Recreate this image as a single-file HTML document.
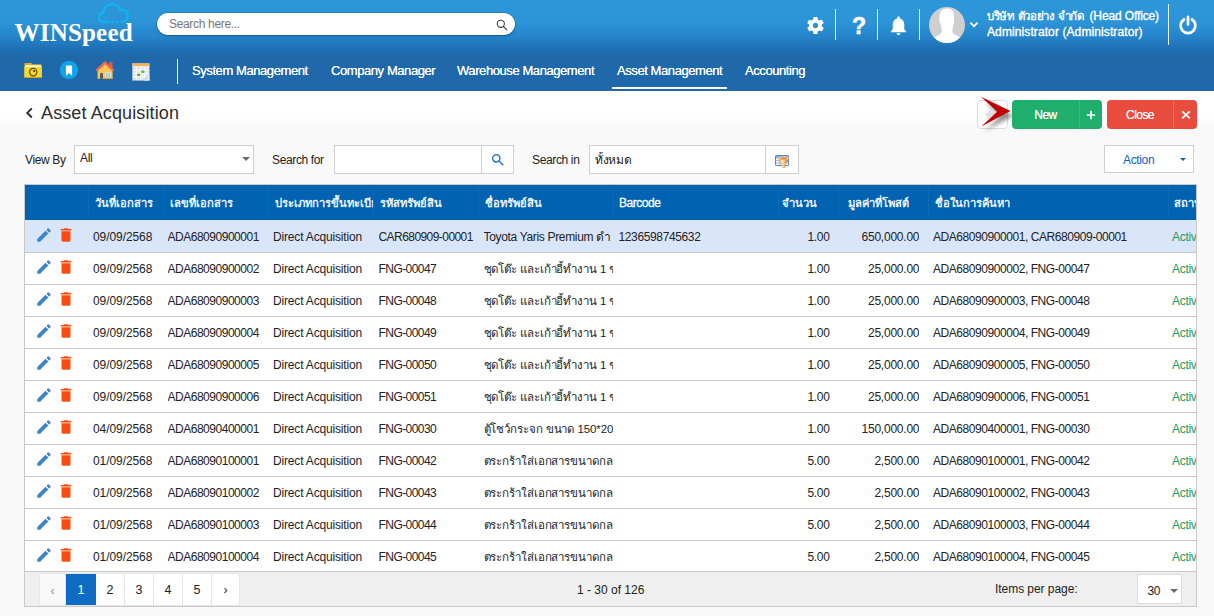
<!DOCTYPE html>
<html lang="th">
<head>
<meta charset="utf-8">
<title>Asset Acquisition</title>
<style>
*{box-sizing:border-box;margin:0;padding:0}
html,body{width:1214px;height:616px;overflow:hidden}
body{font-family:"Liberation Sans",sans-serif;font-size:12px;color:#222;background:#f9f9f9;position:relative}
.abs{position:absolute}
/* header */
#hdr{position:absolute;left:0;top:0;width:1214px;height:91px;background:linear-gradient(#2c96d8 0px,#2c95d7 21px,#2685cb 36px,#1f6eb3 50px,#1f69ab 55px,#1f69ab 91px)}
#logo{position:absolute;left:14.500px;top:18px;font-family:"Liberation Serif",serif;font-weight:bold;font-size:25px;line-height:30px;color:#fff;letter-spacing:.2px;white-space:nowrap}
#gsearch{position:absolute;left:157px;top:13px;width:358px;height:22px;border-radius:11px;background:#fff;box-shadow:0 0 0 1px rgba(0,0,0,.12),0 1px 2px rgba(0,0,0,.25)}
#gsearch span{position:absolute;left:12px;top:0;line-height:22px;font-size:12px;color:#777;letter-spacing:-.33px}
.vsep{position:absolute;width:1px;background:#fff;opacity:.9}
.nav{position:absolute;top:62px;line-height:18px;font-size:13px;letter-spacing:-.42px;color:#fff;white-space:nowrap;text-shadow:0 0 .6px #fff}
#usr{position:absolute;left:987px;top:8px;width:178px;height:32px;overflow:hidden;color:#fff;font-size:12px;line-height:16px;white-space:nowrap;-webkit-text-stroke:.35px #fff;letter-spacing:.1px}
/* title */
#tbar{position:absolute;left:0;top:91px;width:1214px;height:45px;background:linear-gradient(#fff 0,#fff 25px,#f9f9f9 38px)}
#title{position:absolute;left:41px;top:101px;font-size:18px;letter-spacing:.12px;line-height:24px;color:#2d2d2d;white-space:nowrap}
.btn{position:absolute;letter-spacing:-.55px;top:100px;height:29px;border-radius:4px;color:#fff;font-size:12px;line-height:29px;text-align:center;text-shadow:0 0 .5px #fff}
.lbl{position:absolute;letter-spacing:-.36px;font-size:12px;line-height:16px;color:#222;white-space:nowrap}
.box{position:absolute;top:145px;height:29px;background:#fff;border:1px solid #cfcfcf}
/* table */
#tbl{position:absolute;left:24px;top:184px;width:1173px;height:423px;border:1px solid #c9c9c9;background:#fff;overflow:hidden}
#th{position:absolute;left:25px;top:185px;width:1171px;height:35px;background:#0063b1;overflow:hidden}
.h{position:absolute;top:9px;line-height:18px;font-size:12px;-webkit-text-stroke:.3px #fff;color:#fff;white-space:nowrap;overflow:hidden}
.h.t{font-size:11.200px}
.hs{position:absolute;top:3px;width:1px;height:29px;background:rgba(255,255,255,.05)}
.row{position:absolute;left:25px;width:1171px;height:32px;background:#fff;overflow:hidden;box-shadow:inset 0 1px 0 #c8c8c8}
.row.sel{box-shadow:none}
.row.sel{background:#d9e6fa}
.ic{position:absolute;top:5.600px;width:18px;height:18px}
.ic.pen{left:10px}
.ic.tr{left:31.5px}
.c{position:absolute;top:8px;line-height:18px;font-size:12px;color:#222;white-space:nowrap;overflow:hidden;height:20px}
.c1{left:68px;width:70px;letter-spacing:-.08px}
.c2{left:142.500px;width:100px;letter-spacing:-.48px}
.c3{left:248px;width:100px;letter-spacing:-.17px}
.c4{left:353.500px;width:100px;letter-spacing:-.56px}
.c5{left:458.500px;width:129.500px;letter-spacing:-.33px}
.c5.t{font-size:11.500px;letter-spacing:-.1px}
.c6{left:593.500px;width:160px;letter-spacing:-.37px}
.c7{left:752px;width:52.500px;text-align:right;letter-spacing:-.33px}
.c8{left:813px;width:81.300px;text-align:right;letter-spacing:-.23px}
.c9{left:908px;width:232px;letter-spacing:-.44px}
.c10{left:1147px;width:24px;color:#259a5c;letter-spacing:-.3px}
#pager{position:absolute;left:25px;top:571px;width:1171px;height:35px;background:#efefef;border-top:1px solid #c8c8c8}
.pg{position:absolute;top:574px;height:31px;line-height:33px;overflow:hidden;text-align:center;font-size:12.500px;color:#222;background:#fff;border-right:1px solid #e3e3e3}
</style>
</head>
<body>
<div id="hdr">
  <svg class="abs" style="left:97px;top:2px" width="34" height="23" viewBox="0 0 34 23"><path d="M8.600 19.900 H6.800 A4.700 4.700 0 0 1 6.500 10.500 A8.700 8.700 0 0 1 23.300 7.700 A6.100 6.100 0 0 1 25.900 19.900 H24.400" fill="none" stroke="#10b4f2" stroke-width="2.300" stroke-linecap="round"/><path d="M10.600 19.900h2.500M14.700 19.900h2.500M18.800 19.900h2.500" stroke="#10b4f2" stroke-width="2.300" fill="none"/></svg>
  <div id="logo">WINSpeed</div>
  <div id="gsearch"><span>Search here...</span>
    <svg class="abs" style="left:339px;top:6px" width="12" height="12" viewBox="0 0 12 12"><circle cx="4.8" cy="4.8" r="3.6" fill="none" stroke="#444" stroke-width="1.1"/><path d="M7.5 7.5 L10.8 10.8" stroke="#444" stroke-width="1.2" stroke-linecap="round"/></svg>
  </div>
  <!-- right icons -->
  <svg class="abs" style="left:805.300px;top:14.600px" width="21" height="21" viewBox="0 0 24 24"><path fill="#fff" d="M19.14 12.94c.04-.3.06-.61.06-.94 0-.32-.02-.64-.07-.94l2.030-1.580a.49.49 0 0 0 .12-.61l-1.920-3.320a.488.488 0 0 0-.59-.22l-2.390.96c-.5-.38-1.030-.7-1.620-.94l-.36-2.540a.484.484 0 0 0-.48-.41h-3.840c-.24 0-.43.17-.47.41l-.36 2.540c-.59.24-1.130.57-1.620.94l-2.390-.96c-.22-.08-.47 0-.59.22L2.740 8.870c-.12.21-.08.47.12.61l2.030 1.580c-.05.3-.09.63-.09.94s.02.64.07.94l-2.030 1.580a.49.49 0 0 0-.12.610l1.920 3.320c.12.22.37.29.59.22l2.390-.96c.5.38 1.030.7 1.620.94l.36 2.540c.05.24.24.41.48.41h3.840c.24 0 .44-.17.470-.41l.36-2.540c.59-.24 1.130-.56 1.620-.94l2.390.96c.22.08.47 0 .59-.22l1.920-3.320c.12-.22.07-.47-.12-.61l-2.010-1.580zM12 15.100c-1.700 0-3.100-1.400-3.100-3.100s1.400-3.100 3.100-3.100 3.100 1.400 3.100 3.100-1.400 3.100-3.100 3.100z"/></svg>
  <div class="vsep" style="left:835px;top:9px;height:31px"></div>
  <div class="abs" style="left:852px;top:12.500px;width:14px;text-align:center;color:#fff;font-weight:bold;font-size:23px;line-height:26px;-webkit-text-stroke:.6px #fff">?</div>
  <div class="vsep" style="left:877px;top:9px;height:31px"></div>
  <svg class="abs" style="left:887.300px;top:13.700px" width="23" height="23" viewBox="0 0 24 24"><path fill="#fff" d="M12 22c1.100 0 2-.9 2-2h-4c0 1.100.89 2 2 2zm6-6v-5c0-3.070-1.640-5.640-4.500-6.320V4c0-.83-.67-1.500-1.500-1.500s-1.500.67-1.500 1.500v.68C7.630 5.360 6 7.920 6 11v5l-2 2v1h16v-1l-2-2z"/></svg>
  <div class="vsep" style="left:919px;top:9px;height:31px"></div>
  <svg class="abs" style="left:929px;top:7px" width="36" height="36" viewBox="0 0 36 36"><defs><clipPath id="av"><circle cx="18" cy="18" r="18"/></clipPath></defs><circle cx="18" cy="18" r="18" fill="#cfcfcf"/><g clip-path="url(#av)" fill="#fff"><path d="M18.200 1.400 C13.600 1.400 10.900 3.800 10.600 8.200 L10.400 13 C10.400 15.600 11.500 17 12 18.600 L12.800 23.800 C12.900 25.800 11.800 26.800 9.800 27.800 L3 31.600 V37 H33 V31.600 L26.400 27.800 C24.400 26.800 23.200 25.800 23.300 23.800 L24 18.600 C24.500 17 25.100 15.600 25.100 13 L24.900 8.200 C24.600 3.800 22.600 1.400 18.200 1.400 Z"/></g></svg>
  <svg class="abs" style="left:969px;top:21px" width="10" height="8" viewBox="0 0 10 8"><path d="M1.400 1.600 L5 5.200 L8.600 1.600" fill="none" stroke="#fff" stroke-width="1.700"/></svg>
  <div id="usr"><span style="display:inline-block;width:102.500px;height:16px;overflow:hidden;vertical-align:top;letter-spacing:-.3px;font-size:11.500px">บริษัท ตัวอย่าง จำกัด</span><span style="display:inline-block;vertical-align:top;letter-spacing:-.13px">(Head Office)</span><br>Administrator (Administrator)</div>
  <div class="vsep" style="left:1168px;top:4px;height:41px"></div>
  <svg class="abs" style="left:1178px;top:15px" width="20" height="20" viewBox="0 0 20 20"><path d="M6 4.500 A7.400 7.400 0 1 0 14 4.500" fill="none" stroke="#fff" stroke-width="2.700" stroke-linecap="round"/><path d="M10 1.900 V9.600" stroke="#fff" stroke-width="2.700" stroke-linecap="round"/></svg>

  <!-- toolbar icons -->
  <svg class="abs" style="left:24px;top:62px" width="18" height="17" viewBox="0 0 18 17"><path d="M.4 2.100 q0-1.200 1.200-1.200 h5.400 q.8 0 1 .8 l.2 .5 h8.400 q1.200 0 1.200 1.200 v11.300 q0 1.200-1.200 1.200 h-15 q-1.200 0-1.200-1.200z" fill="#d9b31c"/><rect x="1.300" y="3.300" width="15.600" height="2" fill="#fdfbe8"/><path d="M.4 5 h17.400 v9.700 q0 1.200-1.200 1.200 h-15 q-1.200 0-1.200-1.200z" fill="#f6d733"/><path d="M.4 14.300 v.4 q0 1.200 1.200 1.200 h15 q1.200 0 1.200-1.200 v-.4 q0 .7-1.200 .7 h-15 q-1.200 0-1.200-.7z" fill="#caa312"/><circle cx="9.200" cy="10.100" r="3.700" fill="none" stroke="#6a5200" stroke-width="1.200"/><path d="M9.200 10.100 V7.800 A2.300 2.300 0 0 1 11.500 10.100z" fill="#6a5200"/></svg>
  <svg class="abs" style="left:60px;top:61px" width="18" height="18" viewBox="0 0 18 18"><circle cx="9" cy="9" r="9.100" fill="#0fa4e8"/><path d="M5.900 4.600 h6.200 v10.300 l-3.100-2.900 l-3.100 2.900z" fill="#fff"/></svg>
  <svg class="abs" style="left:95px;top:60px" width="20" height="20" viewBox="0 0 20 20"><path d="M14.200 2.600 l1.700-1 l1.700 1 v4.400 h-3.400z" fill="#e5573f"/><path d="M2.600 9.500 L10 3.600 L17.600 9.500 V18.700 H2.600z" fill="#f7c85b"/><path d="M2.600 17.600 h15 v1.300 h-15z" fill="#e0a63a"/><path d="M10 .9 L19.400 9.700 L17.900 11.400 L10 4.600 L2.100 11.400 L.6 9.700z" fill="#f0684a"/><path d="M5 18.700 v-4.400 q0-1.500 1.500-1.500 q1.500 0 1.500 1.500 v4.400z" fill="#565a6c"/><rect x="10.200" y="12.700" width="5.600" height="4.600" fill="#fff"/><path d="M10.700 13.200h2v3.600h-2zM13.300 13.200h2v3.600h-2z" fill="#6fb7e9"/><path d="M10.200 15h5.600" stroke="#fff" stroke-width=".5"/></svg>
  <svg class="abs" style="left:132px;top:62.500px" width="18" height="18" viewBox="0 0 18 18"><rect x=".4" y=".4" width="17" height="17" fill="#dfe6f0"/><rect x=".4" y=".4" width="17" height="3" fill="#fab25a"/><rect x=".4" y="3.400" width="17" height=".7" fill="#f6f8fb"/><path d="M.4 7.200h17M.4 10.300h17M.4 13.400h17M4.500 4v13.400M8.700 4v13.400M12.900 4v13.400" stroke="#fbfcfe" stroke-width=".9"/><rect x="9.200" y="7.600" width="3.300" height="2.300" fill="#6bb42c"/><rect x="5" y="10.700" width="3.300" height="2.300" fill="#6bb42c"/><path d="M.4 .4v17h17" fill="none" stroke="#a9b6c8" stroke-width=".6"/><path d="M11.400 17.400 Q13.500 14.500 17.400 11.800 V17.400z" fill="#f4f5f8"/><path d="M11.400 17.400 Q13.500 14.500 17.400 11.800 Q15.800 15.500 14.800 16.300z" fill="#c5ccd8"/></svg>
  <div class="vsep" style="left:177px;top:59px;height:25px;opacity:1"></div>
  <div class="nav" style="left:192px">System Management</div>
  <div class="nav" style="left:331px">Company Manager</div>
  <div class="nav" style="left:457px">Warehouse Management</div>
  <div class="nav" style="left:617px">Asset Management</div>
  <div class="nav" style="left:745px">Accounting</div>
  <div class="abs" style="left:612px;top:87px;width:115px;height:2px;background:#fff"></div>
</div>

<div id="tbar"></div>
<svg class="abs" style="left:25px;top:107px" width="9" height="12" viewBox="0 0 9 12"><path d="M6.800 1.300 L2.300 5.900 L6.800 10.500" fill="none" stroke="#2d2d2d" stroke-width="1.900"/></svg>
<div id="title">Asset Acquisition</div>

<!-- star + arrow + buttons -->
<div class="abs" style="left:977px;top:100px;width:31px;height:29px;border:1px solid #dcdcdc;border-radius:4px;background:#fff"></div>
<svg class="abs" style="left:983px;top:108px" width="14" height="14" viewBox="0 0 24 24"><path fill="#dedede" d="M12 17.270 18.180 21l-1.640-7.030L22 9.240l-7.190-.610L12 2 9.190 8.630 2 9.240l5.460 4.730L5.820 21z"/></svg>
<svg class="abs" style="left:972px;top:92px;overflow:visible" width="50" height="46" viewBox="0 0 50 46"><defs><filter id="sh" x="-30%" y="-30%" width="180%" height="180%"><feGaussianBlur stdDeviation="2"/></filter></defs><path d="M12.500 9.500 L41.500 23.500 L12.500 39 L28 24.500z" fill="#000" opacity=".45" filter="url(#sh)"/><path d="M9 4.800 L38.400 19 L9.200 34.600 L25.300 19.800z" fill="#c00000"/></svg>
<div class="btn" style="left:1012px;width:90px;background:#1fae6b"></div>
<div class="abs" style="left:1079px;top:100px;width:1px;height:29px;background:#36be7e"></div>
<div class="btn" style="left:1012px;width:67px;top:101px">New</div>
<svg class="abs" style="left:1086px;top:110px" width="10" height="10" viewBox="0 0 10 10"><path d="M5 .8V9.200M.8 5H9.200" stroke="#fff" stroke-width="1.700"/></svg>
<div class="btn" style="left:1107px;width:90px;background:#e84c3d"></div>
<div class="abs" style="left:1173px;top:100px;width:1px;height:29px;background:#ef6b5e"></div>
<div class="btn" style="left:1107px;width:66px;top:101px">Close</div>
<svg class="abs" style="left:1180.500px;top:109.500px" width="10" height="10" viewBox="0 0 10 10"><path d="M1.200 1.400 L8.800 8.400 M8.800 1.400 L1.200 8.400" stroke="#fff" stroke-width="1.800"/></svg>

<!-- filter row -->
<div class="lbl" style="left:25px;top:152px">View By</div>
<div class="box" style="left:74px;width:180px"></div>
<div class="lbl" style="left:80px;top:149.500px">All</div>
<svg class="abs" style="left:242px;top:157px" width="8" height="4" viewBox="0 0 8 4"><path d="M0 0h8L4 4z" fill="#6b6b6b"/></svg>
<div class="lbl" style="left:272px;top:152px">Search for</div>
<div class="box" style="left:334px;width:180px"></div>
<div class="abs" style="left:481px;top:146px;width:1px;height:27px;background:#cfcfcf"></div>
<svg class="abs" style="left:489.500px;top:151.500px" width="16" height="16" viewBox="0 0 24 24"><path fill="#1b6fc2" d="M15.500 14h-.79l-.280-.270A6.471 6.471 0 0 0 16 9.500 6.500 6.500 0 1 0 9.500 16c1.610 0 3.090-.590 4.230-1.570l.270.280v.79l5 4.990L20.490 19l-4.990-5zm-6 0C7.010 14 5 11.990 5 9.500S7.010 5 9.500 5 14 7.010 14 9.500 11.990 14 9.500 14z"/></svg>
<div class="lbl" style="left:532px;top:152px">Search in</div>
<div class="box" style="left:589px;width:210px"></div>
<div class="abs" style="left:765px;top:146px;width:1px;height:27px;background:#cfcfcf"></div>
<div class="lbl" style="left:595px;top:152px;width:60px;overflow:hidden">ทั้งหมด</div>
<svg class="abs" style="left:775px;top:155px" width="15" height="13" viewBox="0 0 15 13"><defs><linearGradient id="fg" x1="0" x2="1"><stop offset="0" stop-color="#e9a544"/><stop offset=".35" stop-color="#fde9c4"/><stop offset=".7" stop-color="#e59a3a"/><stop offset="1" stop-color="#c87a22"/></linearGradient></defs><rect x=".5" y=".5" width="13" height="10" rx=".6" fill="#f4f7fd" stroke="#5d80cf" stroke-width="1"/><rect x="1" y="1" width="12" height="2.300" fill="#8fb0e6"/><path d="M1 5.600h12M1 8h12M4.800 3.300v7M9 3.300v7" stroke="#8fa8dc" stroke-width=".8"/><path d="M3.700 3.300 C3.700 6.300 6.200 7.300 7.200 8.800 V12 C7.200 12.900 10.300 12.900 10.300 12 V8.800 C11.300 7.300 13.900 6.300 13.900 3.300 Z" fill="url(#fg)" stroke="#cf8a35" stroke-width=".4"/><ellipse cx="8.800" cy="3.300" rx="5.100" ry="2" fill="#f3c58b"/><ellipse cx="8.800" cy="3.500" rx="3.400" ry="1.100" fill="#dd8a4c"/></svg>
<div class="abs" style="left:1104px;top:145px;width:90px;height:28px;background:#fff;border:1px solid #cfcfcf"></div>
<div class="lbl" style="left:1123px;top:152px;color:#0f62c0">Action</div>
<svg class="abs" style="left:1180px;top:158px" width="6" height="3" viewBox="0 0 6 3"><path d="M0 0h6L3 3z" fill="#0f62c0"/></svg>

<!-- table -->
<div id="tbl"></div>
<div id="th">
  <div class="hs" style="left:63px"></div><div class="hs" style="left:138px"></div><div class="hs" style="left:243px"></div><div class="hs" style="left:348px"></div><div class="hs" style="left:453px"></div><div class="hs" style="left:588px"></div><div class="hs" style="left:753px"></div><div class="hs" style="left:813px"></div><div class="hs" style="left:903px"></div><div class="hs" style="left:1143px"></div>
  <div class="h t" style="left:70px;width:66px">วันที่เอกสาร</div>
  <div class="h t" style="left:145px;width:96px">เลขที่เอกสาร</div>
  <div class="h t" style="left:250px;width:98px">ประเภทการขึ้นทะเบียน</div>
  <div class="h t" style="left:355px;width:96px">รหัสทรัพย์สิน</div>
  <div class="h t" style="left:460px;width:126px">ชื่อทรัพย์สิน</div>
  <div class="h" style="left:594px;width:150px;letter-spacing:-.47px">Barcode</div>
  <div class="h t" style="left:753px;width:39px;text-align:right">จำนวน</div>
  <div class="h t" style="left:813px;width:71px;text-align:right">มูลค่าที่โพสต์</div>
  <div class="h t" style="left:910px;width:200px">ชื่อในการค้นหา</div>
  <div class="h t" style="left:1149px;width:22px">สถานะ</div>
</div>
<div class="row sel" style="top:220px"><svg class="ic pen" viewBox="0 0 24 24"><path fill="#3a86cb" d="M3 17.25V21h3.75L17.81 9.94l-3.75-3.75L3 17.25zM20.71 7.04a1 1 0 0 0 0-1.41l-2.34-2.34a1 1 0 0 0-1.41 0l-1.83 1.83 3.75 3.75 1.83-1.83z"/></svg><svg class="ic tr" viewBox="0 0 24 24"><path fill="#fb4a12" d="M6 19c0 1.1.9 2 2 2h8c1.1 0 2-.9 2-2V7H6v12zM19 4h-3.500l-1-1h-5l-1 1H5v2h14V4z"/></svg>
<span class="c c1">09/09/2568</span><span class="c c2">ADA68090900001</span><span class="c c3">Direct Acquisition</span><span class="c c4">CAR680909-00001</span><span class="c c5">Toyota Yaris Premium ดำ</span><span class="c c6">1236598745632</span><span class="c c7">1.00</span><span class="c c8">650,000.00</span><span class="c c9">ADA68090900001, CAR680909-00001</span><span class="c c10">Active</span></div>
<div class="row" style="top:252px"><svg class="ic pen" viewBox="0 0 24 24"><path fill="#3a86cb" d="M3 17.25V21h3.75L17.81 9.94l-3.75-3.75L3 17.25zM20.71 7.04a1 1 0 0 0 0-1.41l-2.34-2.34a1 1 0 0 0-1.41 0l-1.83 1.83 3.75 3.75 1.83-1.83z"/></svg><svg class="ic tr" viewBox="0 0 24 24"><path fill="#fb4a12" d="M6 19c0 1.1.9 2 2 2h8c1.1 0 2-.9 2-2V7H6v12zM19 4h-3.500l-1-1h-5l-1 1H5v2h14V4z"/></svg>
<span class="c c1">09/09/2568</span><span class="c c2">ADA68090900002</span><span class="c c3">Direct Acquisition</span><span class="c c4">FNG-00047</span><span class="c c5 t">ชุดโต๊ะ และเก้าอี้ทำงาน 1 ชุด</span><span class="c c6"></span><span class="c c7">1.00</span><span class="c c8">25,000.00</span><span class="c c9">ADA68090900002, FNG-00047</span><span class="c c10">Active</span></div>
<div class="row" style="top:284px"><svg class="ic pen" viewBox="0 0 24 24"><path fill="#3a86cb" d="M3 17.25V21h3.75L17.81 9.94l-3.75-3.75L3 17.25zM20.71 7.04a1 1 0 0 0 0-1.41l-2.34-2.34a1 1 0 0 0-1.41 0l-1.83 1.83 3.75 3.75 1.83-1.83z"/></svg><svg class="ic tr" viewBox="0 0 24 24"><path fill="#fb4a12" d="M6 19c0 1.1.9 2 2 2h8c1.1 0 2-.9 2-2V7H6v12zM19 4h-3.500l-1-1h-5l-1 1H5v2h14V4z"/></svg>
<span class="c c1">09/09/2568</span><span class="c c2">ADA68090900003</span><span class="c c3">Direct Acquisition</span><span class="c c4">FNG-00048</span><span class="c c5 t">ชุดโต๊ะ และเก้าอี้ทำงาน 1 ชุด</span><span class="c c6"></span><span class="c c7">1.00</span><span class="c c8">25,000.00</span><span class="c c9">ADA68090900003, FNG-00048</span><span class="c c10">Active</span></div>
<div class="row" style="top:316px"><svg class="ic pen" viewBox="0 0 24 24"><path fill="#3a86cb" d="M3 17.25V21h3.75L17.81 9.94l-3.75-3.75L3 17.25zM20.71 7.04a1 1 0 0 0 0-1.41l-2.34-2.34a1 1 0 0 0-1.41 0l-1.83 1.83 3.75 3.75 1.83-1.83z"/></svg><svg class="ic tr" viewBox="0 0 24 24"><path fill="#fb4a12" d="M6 19c0 1.1.9 2 2 2h8c1.1 0 2-.9 2-2V7H6v12zM19 4h-3.500l-1-1h-5l-1 1H5v2h14V4z"/></svg>
<span class="c c1">09/09/2568</span><span class="c c2">ADA68090900004</span><span class="c c3">Direct Acquisition</span><span class="c c4">FNG-00049</span><span class="c c5 t">ชุดโต๊ะ และเก้าอี้ทำงาน 1 ชุด</span><span class="c c6"></span><span class="c c7">1.00</span><span class="c c8">25,000.00</span><span class="c c9">ADA68090900004, FNG-00049</span><span class="c c10">Active</span></div>
<div class="row" style="top:348px"><svg class="ic pen" viewBox="0 0 24 24"><path fill="#3a86cb" d="M3 17.25V21h3.75L17.81 9.94l-3.75-3.75L3 17.25zM20.71 7.04a1 1 0 0 0 0-1.41l-2.34-2.34a1 1 0 0 0-1.41 0l-1.83 1.83 3.75 3.75 1.83-1.83z"/></svg><svg class="ic tr" viewBox="0 0 24 24"><path fill="#fb4a12" d="M6 19c0 1.1.9 2 2 2h8c1.1 0 2-.9 2-2V7H6v12zM19 4h-3.500l-1-1h-5l-1 1H5v2h14V4z"/></svg>
<span class="c c1">09/09/2568</span><span class="c c2">ADA68090900005</span><span class="c c3">Direct Acquisition</span><span class="c c4">FNG-00050</span><span class="c c5 t">ชุดโต๊ะ และเก้าอี้ทำงาน 1 ชุด</span><span class="c c6"></span><span class="c c7">1.00</span><span class="c c8">25,000.00</span><span class="c c9">ADA68090900005, FNG-00050</span><span class="c c10">Active</span></div>
<div class="row" style="top:380px"><svg class="ic pen" viewBox="0 0 24 24"><path fill="#3a86cb" d="M3 17.25V21h3.75L17.81 9.94l-3.75-3.75L3 17.25zM20.71 7.04a1 1 0 0 0 0-1.41l-2.34-2.34a1 1 0 0 0-1.41 0l-1.83 1.83 3.75 3.75 1.83-1.83z"/></svg><svg class="ic tr" viewBox="0 0 24 24"><path fill="#fb4a12" d="M6 19c0 1.1.9 2 2 2h8c1.1 0 2-.9 2-2V7H6v12zM19 4h-3.500l-1-1h-5l-1 1H5v2h14V4z"/></svg>
<span class="c c1">09/09/2568</span><span class="c c2">ADA68090900006</span><span class="c c3">Direct Acquisition</span><span class="c c4">FNG-00051</span><span class="c c5 t">ชุดโต๊ะ และเก้าอี้ทำงาน 1 ชุด</span><span class="c c6"></span><span class="c c7">1.00</span><span class="c c8">25,000.00</span><span class="c c9">ADA68090900006, FNG-00051</span><span class="c c10">Active</span></div>
<div class="row" style="top:412px"><svg class="ic pen" viewBox="0 0 24 24"><path fill="#3a86cb" d="M3 17.25V21h3.75L17.81 9.94l-3.75-3.75L3 17.25zM20.71 7.04a1 1 0 0 0 0-1.41l-2.34-2.34a1 1 0 0 0-1.41 0l-1.83 1.83 3.75 3.75 1.83-1.83z"/></svg><svg class="ic tr" viewBox="0 0 24 24"><path fill="#fb4a12" d="M6 19c0 1.1.9 2 2 2h8c1.1 0 2-.9 2-2V7H6v12zM19 4h-3.500l-1-1h-5l-1 1H5v2h14V4z"/></svg>
<span class="c c1">04/09/2568</span><span class="c c2">ADA68090400001</span><span class="c c3">Direct Acquisition</span><span class="c c4">FNG-00030</span><span class="c c5 t">ตู้โชว์กระจก ขนาด 150*200</span><span class="c c6"></span><span class="c c7">1.00</span><span class="c c8">150,000.00</span><span class="c c9">ADA68090400001, FNG-00030</span><span class="c c10">Active</span></div>
<div class="row" style="top:444px"><svg class="ic pen" viewBox="0 0 24 24"><path fill="#3a86cb" d="M3 17.25V21h3.75L17.81 9.94l-3.75-3.75L3 17.25zM20.71 7.04a1 1 0 0 0 0-1.41l-2.34-2.34a1 1 0 0 0-1.41 0l-1.83 1.83 3.75 3.75 1.83-1.83z"/></svg><svg class="ic tr" viewBox="0 0 24 24"><path fill="#fb4a12" d="M6 19c0 1.1.9 2 2 2h8c1.1 0 2-.9 2-2V7H6v12zM19 4h-3.500l-1-1h-5l-1 1H5v2h14V4z"/></svg>
<span class="c c1">01/09/2568</span><span class="c c2">ADA68090100001</span><span class="c c3">Direct Acquisition</span><span class="c c4">FNG-00042</span><span class="c c5 t">ตระกร้าใส่เอกสารขนาดกลาง</span><span class="c c6"></span><span class="c c7">5.00</span><span class="c c8">2,500.00</span><span class="c c9">ADA68090100001, FNG-00042</span><span class="c c10">Active</span></div>
<div class="row" style="top:476px"><svg class="ic pen" viewBox="0 0 24 24"><path fill="#3a86cb" d="M3 17.25V21h3.75L17.81 9.94l-3.75-3.75L3 17.25zM20.71 7.04a1 1 0 0 0 0-1.41l-2.34-2.34a1 1 0 0 0-1.41 0l-1.83 1.83 3.75 3.75 1.83-1.83z"/></svg><svg class="ic tr" viewBox="0 0 24 24"><path fill="#fb4a12" d="M6 19c0 1.1.9 2 2 2h8c1.1 0 2-.9 2-2V7H6v12zM19 4h-3.500l-1-1h-5l-1 1H5v2h14V4z"/></svg>
<span class="c c1">01/09/2568</span><span class="c c2">ADA68090100002</span><span class="c c3">Direct Acquisition</span><span class="c c4">FNG-00043</span><span class="c c5 t">ตระกร้าใส่เอกสารขนาดกลาง</span><span class="c c6"></span><span class="c c7">5.00</span><span class="c c8">2,500.00</span><span class="c c9">ADA68090100002, FNG-00043</span><span class="c c10">Active</span></div>
<div class="row" style="top:508px"><svg class="ic pen" viewBox="0 0 24 24"><path fill="#3a86cb" d="M3 17.25V21h3.75L17.81 9.94l-3.75-3.75L3 17.25zM20.71 7.04a1 1 0 0 0 0-1.41l-2.34-2.34a1 1 0 0 0-1.41 0l-1.83 1.83 3.75 3.75 1.83-1.83z"/></svg><svg class="ic tr" viewBox="0 0 24 24"><path fill="#fb4a12" d="M6 19c0 1.1.9 2 2 2h8c1.1 0 2-.9 2-2V7H6v12zM19 4h-3.500l-1-1h-5l-1 1H5v2h14V4z"/></svg>
<span class="c c1">01/09/2568</span><span class="c c2">ADA68090100003</span><span class="c c3">Direct Acquisition</span><span class="c c4">FNG-00044</span><span class="c c5 t">ตระกร้าใส่เอกสารขนาดกลาง</span><span class="c c6"></span><span class="c c7">5.00</span><span class="c c8">2,500.00</span><span class="c c9">ADA68090100003, FNG-00044</span><span class="c c10">Active</span></div>
<div class="row" style="top:540px"><svg class="ic pen" viewBox="0 0 24 24"><path fill="#3a86cb" d="M3 17.25V21h3.75L17.81 9.94l-3.75-3.75L3 17.25zM20.71 7.04a1 1 0 0 0 0-1.41l-2.34-2.34a1 1 0 0 0-1.41 0l-1.83 1.83 3.75 3.75 1.83-1.83z"/></svg><svg class="ic tr" viewBox="0 0 24 24"><path fill="#fb4a12" d="M6 19c0 1.1.9 2 2 2h8c1.1 0 2-.9 2-2V7H6v12zM19 4h-3.500l-1-1h-5l-1 1H5v2h14V4z"/></svg>
<span class="c c1">01/09/2568</span><span class="c c2">ADA68090100004</span><span class="c c3">Direct Acquisition</span><span class="c c4">FNG-00045</span><span class="c c5 t">ตระกร้าใส่เอกสารขนาดกลาง</span><span class="c c6"></span><span class="c c7">5.00</span><span class="c c8">2,500.00</span><span class="c c9">ADA68090100004, FNG-00045</span><span class="c c10">Active</span></div>
<div id="pager"></div>
<div class="abs" style="left:40px;top:574px;width:199px;height:31px;background:#fff;border-radius:3px;box-shadow:0 0 0 1px #e6e6e6"></div>
<div class="pg" style="left:40px;width:26px;background:#f8f8f8;color:#999;border-radius:3px 0 0 3px;font-size:13px">&#8249;</div>
<div class="pg" style="left:66px;width:30px;background:#0f6cc4;color:#fff;border-right:0">1</div>
<div class="pg" style="left:96px;width:29px">2</div>
<div class="pg" style="left:125px;width:29px">3</div>
<div class="pg" style="left:154px;width:29px">4</div>
<div class="pg" style="left:183px;width:29px">5</div>
<div class="pg" style="left:212px;width:27px;border-right:0;border-radius:0 3px 3px 0">&#8250;</div>
<div class="lbl" style="left:577px;top:582px;letter-spacing:0">1 - 30 of 126</div>
<div class="lbl" style="left:995px;top:581px;letter-spacing:-.05px">Items per page:</div>
<div class="abs" style="left:1137px;top:574px;width:45px;height:30px;background:#fff;border:1px solid #dcdcdc"></div>
<div class="lbl" style="left:1147.500px;top:583px;letter-spacing:-.5px">30</div>
<svg class="abs" style="left:1170px;top:589px" width="8" height="4" viewBox="0 0 8 4"><path d="M0 0h8L4 4z" fill="#6b6b6b"/></svg>
</body>
</html>
